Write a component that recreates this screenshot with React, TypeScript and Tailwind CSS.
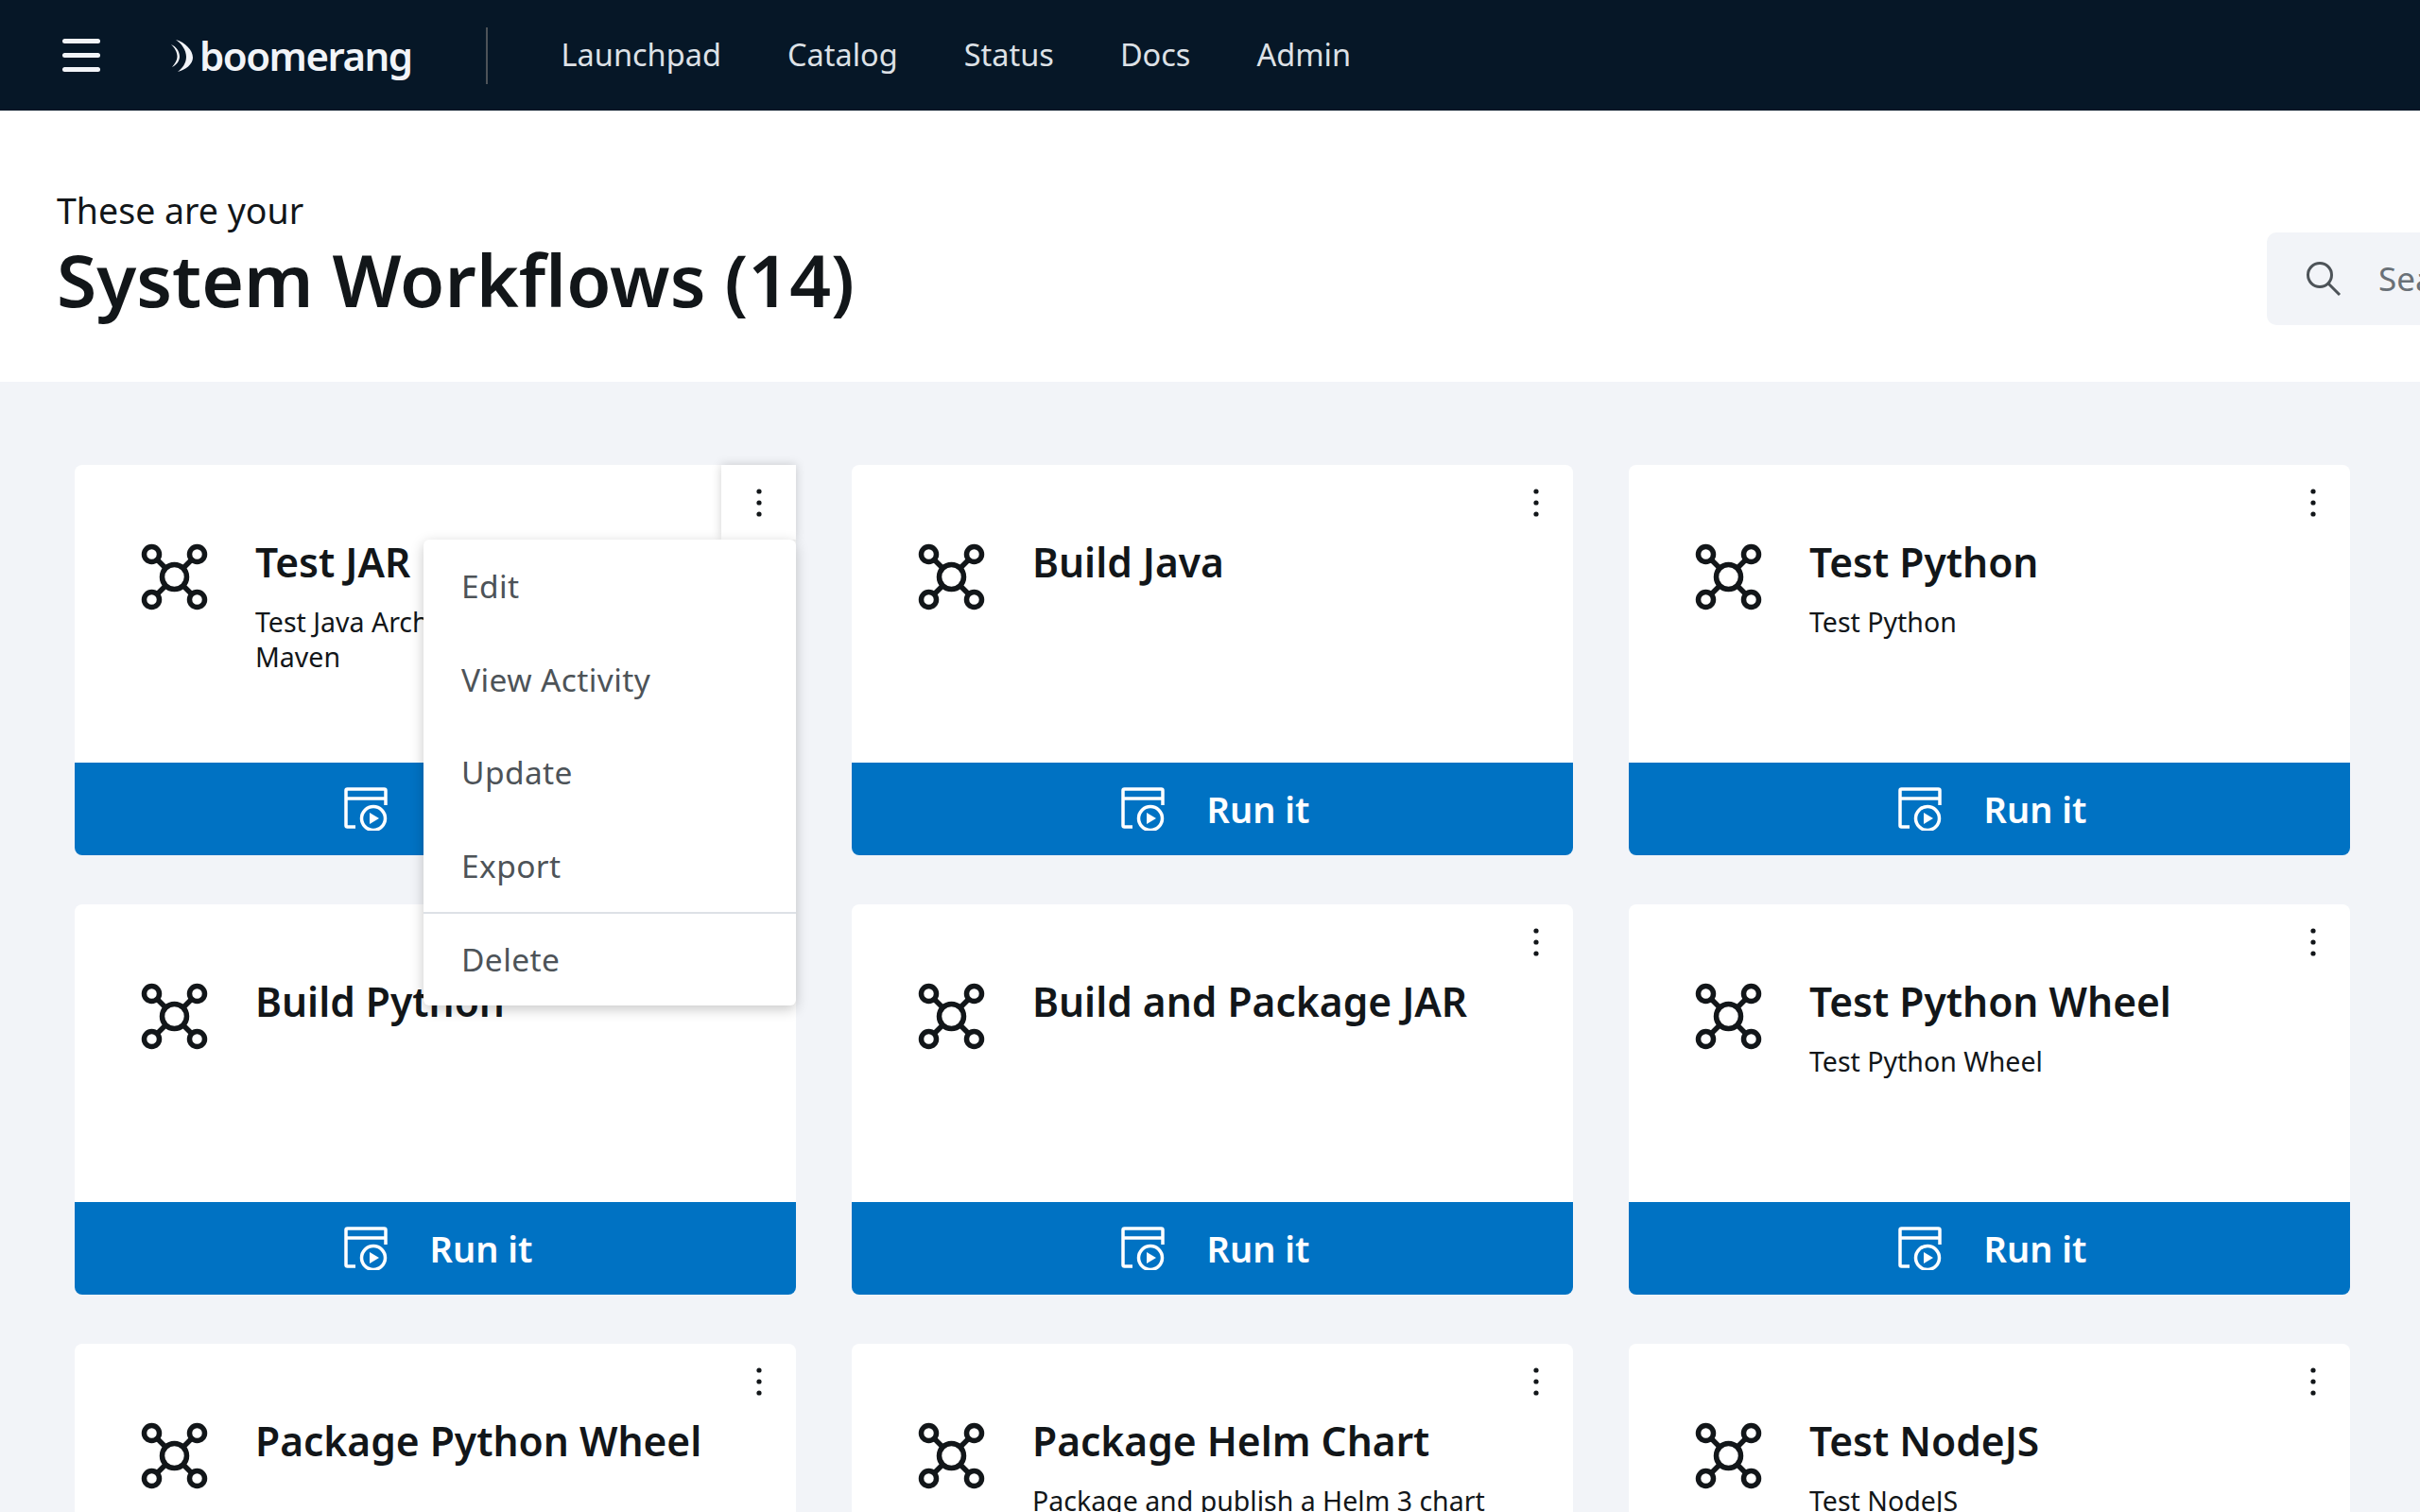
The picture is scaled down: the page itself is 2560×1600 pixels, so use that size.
const FONT = "font-['Noto_Sans',sans-serif]";

function NetworkIcon() {
  return (
    <svg viewBox="0 0 72 72" className="w-[72px] h-[72px] shrink-0" fill="none" stroke="#121619" strokeWidth="5.5">
      <path d="M17 17 L26 26 M54 17 L45 26 M17 54 L26 45 M54 54 L45 45" />
      <circle cx="35.5" cy="35.5" r="13" />
      <circle cx="11.5" cy="11.5" r="8" />
      <circle cx="59.5" cy="11.5" r="8" />
      <circle cx="11.5" cy="59.5" r="8" />
      <circle cx="59.5" cy="59.5" r="8" />
    </svg>
  );
}

function RunIcon() {
  return (
    <svg viewBox="0 0 46 46" className="w-[46px] h-[46px] shrink-0" fill="none" stroke="#ffffff" strokeWidth="3.5">
      <path d="M12 42 H3.5 Q2 42 2 40.5 V3.5 Q2 2 3.5 2 H42.5 Q44 2 44 3.5 V19" />
      <path d="M2 12 H44" />
      <circle cx="31" cy="33" r="12.5" />
      <path d="M27 27 L37 33 L27 39 Z" fill="#ffffff" stroke="none" />
    </svg>
  );
}

function Dots() {
  return (
    <svg viewBox="0 0 8 32" className="w-[8px] h-[32px]" fill="#121619">
      <circle cx="4" cy="4" r="2.6" />
      <circle cx="4" cy="16" r="2.6" />
      <circle cx="4" cy="28" r="2.6" />
    </svg>
  );
}

function Card({ title, desc, open }: { title: string; desc?: string; open?: boolean }) {
  return (
    <div className="relative h-[413px] w-[763px] rounded-[8px] bg-white flex flex-col">
      <div className="flex-1 flex pl-[70px] pt-[83px] gap-[49px] rounded-t-[8px]">
        <NetworkIcon />
        <div className="flex flex-col">
          <div className="text-[42.5px] leading-[60px] -mt-[10px] font-semibold text-[#121619]">{title}</div>
          {desc && <div className="mt-[15px] w-[560px] text-[28.5px] leading-[37px] text-[#121619]">{desc}</div>}
        </div>
      </div>
      <div className="absolute top-0 right-0 w-[79px] h-[79px] flex items-center justify-center">
        {open && <div className="absolute inset-0 bg-white shadow-[0_0_10px_rgba(0,0,0,0.18)]" />}
        <span className="relative flex"><Dots /></span>
      </div>
      <div className="h-[98px] bg-[#0072c3] rounded-b-[8px] flex items-center justify-center gap-[45px] pl-[6px] text-white">
        <RunIcon />
        <span className="text-[38px] font-semibold">Run it</span>
      </div>
      {open && (
        <div className="absolute z-10 left-[369px] top-[79px] w-[394px] h-[493px] bg-white rounded-[6px] shadow-[0_4px_14px_rgba(0,0,0,0.22)] flex flex-col text-[33.5px] tracking-[0.4px] text-[#4d5358]">
          <div className="flex flex-col">
            {["Edit", "View Activity", "Update", "Export"].map((t) => (
              <div key={t} className="h-[98.5px] flex items-center pl-[40px]">{t}</div>
            ))}
          </div>
          <div className="border-t-2 border-[#dde1e6] flex-1 flex items-center pl-[40px]">Delete</div>
        </div>
      )}
    </div>
  );
}

export default function App() {
  return (
    <div className={`w-[2560px] h-[1600px] overflow-hidden bg-[#f2f4f8] ${FONT}`}>
      <header className="h-[117px] bg-[#061727] flex items-center text-[#f2f4f8]">
        <div className="ml-[66px] w-[40px] flex flex-col gap-[10px]">
          <span className="block h-[5px] w-[40px] rounded-full bg-[#f2f4f8]" />
          <span className="block h-[5px] w-[40px] rounded-full bg-[#f2f4f8]" />
          <span className="block h-[5px] w-[40px] rounded-full bg-[#f2f4f8]" />
        </div>
        <svg viewBox="0 0 25 34" className="ml-[74px] w-[25px] h-[34px]" fill="#f2f4f8">
          <path d="M6 0 C16 3 24 11 24 19 C24 26 16 32 8 34 C13 30 17 25 17 18 C17 11 12 4 6 0 Z" />
          <path d="M1 5 C6 7 10 12 10 18 C10 23 6 27 2 29 C5 25 7.5 22 7.5 18 C7.5 13 5 9 1 5 Z" />
        </svg>
        <span className="ml-[6px] text-[42px] tracking-[-1.5px] font-semibold leading-none">boomerang</span>
        <span className="ml-[78px] w-[2px] h-[60px] bg-[#4d5358]" />
        <nav className="ml-[78px] flex gap-[70px] text-[32.5px] text-[#dde1e6]">
          <span>Launchpad</span>
          <span>Catalog</span>
          <span>Status</span>
          <span>Docs</span>
          <span>Admin</span>
        </nav>
      </header>
      <section className="h-[287px] bg-white flex items-center justify-between pl-[60px]">
        <div className="flex flex-col mt-[18px]">
          <div className="text-[37.5px] leading-[50px] text-[#121619]">These are your</div>
          <div className="text-[76.7px] leading-[94px] font-semibold text-[#121619]">System Workflows (14)</div>
        </div>
        <div className="w-[162px] h-[98px] bg-[#f2f4f8] rounded-l-[10px] flex items-center pl-[41px] gap-[39px] mt-[69px] overflow-hidden shrink-0">
          <svg viewBox="0 0 38 38" className="w-[38px] h-[38px] shrink-0" fill="none" stroke="#4d5358" strokeWidth="3">
            <circle cx="15" cy="15" r="12.5" />
            <path d="M24 24 L36 36" />
          </svg>
          <span className="text-[35px] text-[#697077] whitespace-nowrap">Search</span>
        </div>
      </section>
      <main className="pl-[79px] pt-[88px] grid grid-cols-[repeat(3,763px)] gap-x-[59px] gap-y-[52px]">
        <Card title="Test JAR" desc="Test Java Archive (JAR) with Apache Maven" open />
        <Card title="Build Java" />
        <Card title="Test Python" desc="Test Python" />
        <Card title="Build Python" />
        <Card title="Build and Package JAR" />
        <Card title="Test Python Wheel" desc="Test Python Wheel" />
        <Card title="Package Python Wheel" />
        <Card title="Package Helm Chart" desc="Package and publish a Helm 3 chart" />
        <Card title="Test NodeJS" desc="Test NodeJS" />
      </main>
    </div>
  );
}
